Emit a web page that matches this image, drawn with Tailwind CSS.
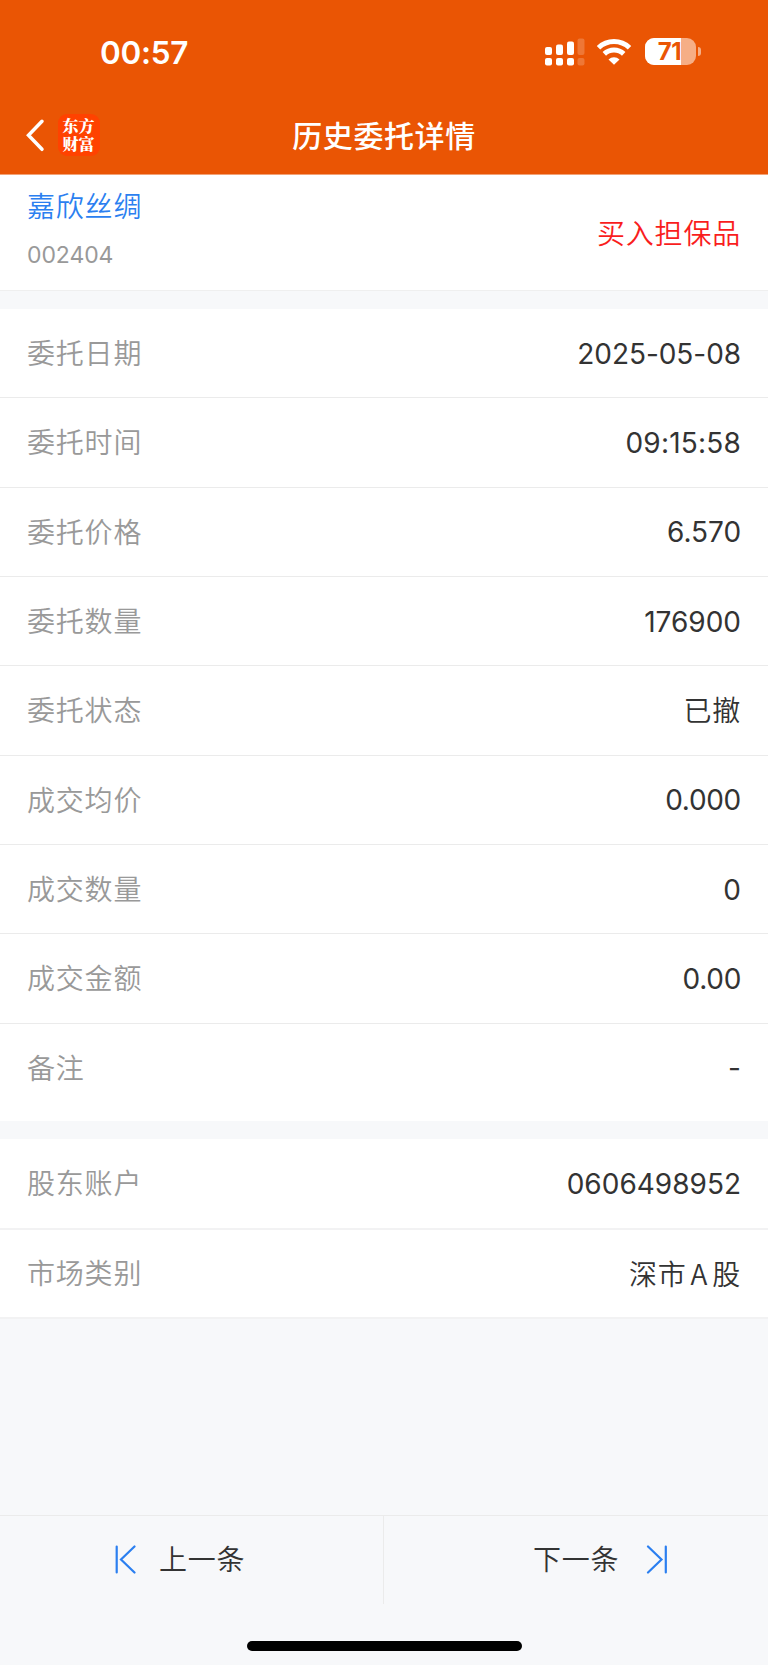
<!DOCTYPE html>
<html lang="zh-CN">
	<head>
		<meta charset="UTF-8">
		<meta name="viewport" content="width=device-width,initial-scale=1.0">
		<title>历史委托详情</title>
		<script src="https://cdn.jsdelivr.net/npm/@tailwindcss/browser@4"></script>
	</head>
	<body class="h-[1665px] flex flex-col overflow-hidden bg-[#f7f8fa] font-['Inter','Noto_Sans_CJK_SC',sans-serif] font-[350] text-[28px] leading-none text-[#333]">
		<header class="h-[175px] shrink-0 flex flex-col bg-[#ea5504] border-b border-[#f2a276] text-white">
			<!-- Status bar -->
			<div class="h-[103px] flex items-center justify-between pl-[100px] pr-[67px]">
				<span class="pt-[3px] text-[31.500px] font-semibold tracking-[-0.300px]">00:57</span>
				<div class="flex items-center">
					<svg class="w-[40px] h-[28px]" viewBox="0 0 40 28" fill="#fff">
						<rect x="0" y="9" width="7" height="8" rx="2" />
						<rect x="11" y="6.500" width="7" height="10.500" rx="2" />
						<rect x="22" y="3.500" width="7" height="13.500" rx="2" />
						<rect x="32.500" y="0.500" width="7" height="16.500" rx="2" opacity=".2" />
						<rect x="0" y="20" width="7" height="7.500" rx="2" />
						<rect x="11" y="20" width="7" height="7.500" rx="2" />
						<rect x="22" y="20" width="7" height="7.500" rx="2" />
						<rect x="32.500" y="20" width="7" height="7.500" rx="2" opacity=".2" />
					</svg>
					<svg class="w-[36px] h-[28px] ml-[11.500px]" viewBox="0 0 36 28" fill="none" stroke="#fff" stroke-width="5">
						<path d="M2.500 9.800A22.500 22.500 0 0 1 33.500 9.800" />
						<path d="M8.300 15.900A14 14 0 0 1 27.700 15.900" />
						<path d="M18 26.800L12.500 21.400A8 8 0 0 1 23.500 21.400Z" fill="#fff" stroke="none" />
					</svg>
					<div class="flex items-center ml-[13px]">
						<div class="relative w-[51px] h-[27px] rounded-[9px] overflow-hidden bg-[#f6ae86]">
							<div class="w-[36px] h-full bg-white"></div>
							<span class="absolute inset-0 flex items-center justify-center pt-[1px] pr-[2px] text-[24px] font-bold tracking-[-0.500px] text-[#ea5504]">71</span>
						</div>
						<div class="w-[3px] h-[9px] ml-[2px] rounded-r-full bg-[#f6ae86]"></div>
					</div>
				</div>
			</div>

			<!-- Title bar -->
			<div class="relative h-[64px] flex items-center pl-[25px]">
				<svg class="w-[20px] h-[34px]" viewBox="0 0 20 34" fill="none" stroke="#fff" stroke-width="3.500" stroke-linecap="round" stroke-linejoin="miter">
					<path d="M17 3.300L3.500 17.300L17 31.300" />
				</svg>
				<div class="w-[42px] h-[42px] ml-[12.500px] rounded-[9px] bg-[#ff4200] flex flex-col items-center justify-center pb-[1px] text-[16px] leading-[17.500px] font-black font-['Noto_Serif_CJK_SC','Noto_Sans_CJK_SC',serif]">
					<span>东方</span>
					<span>财富</span>
				</div>
				<h1 class="absolute inset-0 flex items-center justify-center pt-[1px] text-[30px] font-medium tracking-[0.600px]">历史委托详情</h1>
			</div>
		</header>

		<section class="h-[116px] shrink-0 flex items-center justify-between px-[27px] bg-white border-b border-[#efefef]">
			<div class="flex flex-col pb-[5px]">
				<span class="text-[28px] tracking-[0.800px] text-[#2b7ff0]">嘉欣丝绸</span>
				<span class="mt-[23px] text-[23px] font-normal tracking-[-0.100px] text-[#999]">002404</span>
			</div>
			<span class="pt-[3px] text-[28px] tracking-[0.800px] text-[#f91d1d]">买入担保品</span>
		</section>

		<section class="mt-[18px] shrink-0 bg-white">
			<div class="h-[89.340px] flex items-center justify-between px-[27px] border-b border-[#ebebeb]">
				<span class="pt-[2px] tracking-[0.800px] text-[#999]">委托日期</span>
				<span class="pt-[1px] font-normal tracking-[-0.060px]">2025-05-08</span>
			</div>
			<div class="h-[89.340px] flex items-center justify-between px-[27px] border-b border-[#ebebeb]">
				<span class="pt-[2px] tracking-[0.800px] text-[#999]">委托时间</span>
				<span class="pt-[1px] font-normal tracking-[0.200px]">09:15:58</span>
			</div>
			<div class="h-[89.340px] flex items-center justify-between px-[27px] border-b border-[#ebebeb]">
				<span class="pt-[2px] tracking-[0.800px] text-[#999]">委托价格</span>
				<span class="pt-[1px] font-normal tracking-[-0.060px]">6.570</span>
			</div>
			<div class="h-[89.340px] flex items-center justify-between px-[27px] border-b border-[#ebebeb]">
				<span class="pt-[2px] tracking-[0.800px] text-[#999]">委托数量</span>
				<span class="pt-[1px] font-normal">176900</span>
			</div>
			<div class="h-[89.340px] flex items-center justify-between px-[27px] border-b border-[#ebebeb]">
				<span class="pt-[2px] tracking-[0.800px] text-[#999]">委托状态</span>
				<span class="pt-[2px] tracking-[0.800px]">已撤</span>
			</div>
			<div class="h-[89.340px] flex items-center justify-between px-[27px] border-b border-[#ebebeb]">
				<span class="pt-[2px] tracking-[0.800px] text-[#999]">成交均价</span>
				<span class="pt-[1px] font-normal tracking-[-0.300px]">0.000</span>
			</div>
			<div class="h-[89.340px] flex items-center justify-between px-[27px] border-b border-[#ebebeb]">
				<span class="pt-[2px] tracking-[0.800px] text-[#999]">成交数量</span>
				<span class="pt-[1px] font-normal">0</span>
			</div>
			<div class="h-[89.340px] flex items-center justify-between px-[27px] border-b border-[#ebebeb]">
				<span class="pt-[2px] tracking-[0.800px] text-[#999]">成交金额</span>
				<span class="pt-[1px] font-normal tracking-[-0.300px]">0.00</span>
			</div>
			<div class="h-[97.300px] pb-[9px] flex items-center justify-between px-[27px]">
				<span class="pt-[2px] tracking-[0.800px] text-[#999]">备注</span>
				<span class="pt-[1px] font-normal">-</span>
			</div>
		</section>

		<section class="mt-[18px] shrink-0 bg-white">
			<div class="h-[91px] flex items-center justify-between px-[27px] border-b-2 border-[#f2f2f3]">
				<span class="pt-[2px] tracking-[0.800px] text-[#999]">股东账户</span>
				<span class="pt-[2px] font-normal">0606498952</span>
			</div>
			<div class="h-[89px] flex items-center justify-between px-[27px] border-b-2 border-[#f2f2f3]">
				<span class="pt-[2px] tracking-[0.800px] text-[#999]">市场类别</span>
				<span class="pt-[2px] tracking-[0.800px]">深市<span class="mx-[4px] font-['Noto_Sans_CJK_SC']">A</span>股</span>
			</div>
		</section>

		<footer class="mt-auto h-[150px] shrink-0 flex flex-col border-t border-[#ebebeb]">
			<nav class="h-[88px] flex">
				<a class="w-[383px] flex items-center pl-[114px]">
					<svg class="w-[22px] h-[30px]" viewBox="0 0 22 30" fill="none" stroke="#2b7ff0" stroke-width="2.200" stroke-linecap="round">
						<path d="M2.700 1.500V27.500M20.500 1.500L7 14.500L20.500 27.500" />
					</svg>
					<span class="ml-[23px] tracking-[0.800px]">上一条</span>
				</a>
				<a class="flex-1 flex items-center pl-[149px] border-l border-[#ebebeb]">
					<span class="tracking-[0.800px]">下一条</span>
					<svg class="w-[22px] h-[30px] ml-[27px]" viewBox="0 0 22 30" fill="none" stroke="#2b7ff0" stroke-width="2.200" stroke-linecap="round">
						<path d="M19.800 1.500V27.500M2 1.500L15.500 14.500L2 27.500" />
					</svg>
				</a>
			</nav>
			<!-- Home indicator -->
			<div class="mt-[37px] mx-auto w-[275px] h-[9.500px] rounded-full bg-black"></div>
		</footer>
	</body>
</html>
